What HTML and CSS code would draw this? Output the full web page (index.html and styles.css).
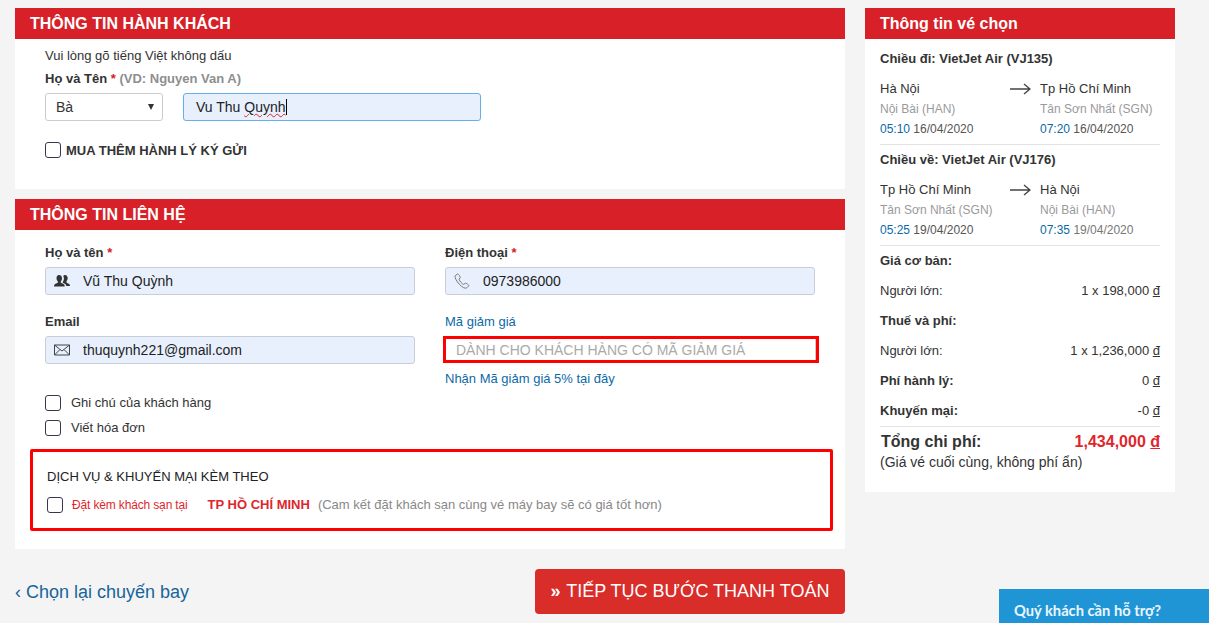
FILE: index.html
```html
<!DOCTYPE html>
<html lang="vi">
  <head>
    <meta charset="utf-8" />
    <title>Thông tin hành khách</title>
    <link rel="stylesheet" href="styles.css">
  </head>
  <body>
    <div class="page">
      <main class="main-col">
        <section class="panel panel-passenger">
          <h2 class="panel-head">THÔNG TIN HÀNH KHÁCH</h2>
          <div class="panel-body">
            <p class="hint">Vui lòng gõ tiếng Việt không dấu</p>
            <p class="name-label">Họ và Tên <span class="req">*</span> <span class="muted">(VD: Nguyen Van A)</span></p>
            <div class="name-row">
              <div class="select-box"><span>Bà</span><i class="select-arrow"></i></div>
              <div class="name-input"><span class="typo">Vu Thu <u>Quynh</u></span><i class="caret"></i></div>
            </div>
            <label class="baggage"><span class="check"></span>MUA THÊM HÀNH LÝ KÝ GỬI</label>
          </div>
        </section>

        <section class="panel panel-contact">
          <h2 class="panel-head">THÔNG TIN LIÊN HỆ</h2>
          <div class="panel-body">
            <div class="field-grid">
              <div class="field">
                <label class="field-label">Họ và tên <span class="req">*</span></label>
                <div class="icon-input">
                  <svg class="ico" viewBox="0 0 16 14" width="16" height="14"><path fill="#333" d="M5 1c2 0 3 1.500 3 3.500 0 1.500-.8 2.500-1.300 3.200 0 1 .5 1.300 2 1.900 1.300.5 2 1 2 2.900H0c0-1.900.8-2.400 2-2.900 1.500-.6 2-.9 2-1.900C3.500 7 2.500 6 2.500 4.500 2.500 2.500 3.200 1 5 1z"/><path fill="#333" d="M11 1c1.800 0 2.700 1.500 2.700 3.300 0 1.400-.8 2.500-1.300 3.200 0 1 .4 1.300 1.700 1.900 1 .4 1.900 1 1.900 2.600h-3.700c-.2-1.300-1.100-2.100-2.400-2.700-.9-.4-1.200-.6-1.200-1.300.7-.9 1.200-2 1.200-3.500 0-1-.2-1.900-.7-2.600.5-.6 1.100-.9 1.800-.9z"/></svg>
                  <input class="plain-input" value="Vũ Thu Quỳnh">
                </div>
              </div>
              <div class="field">
                <label class="field-label">Điện thoại <span class="req">*</span></label>
                <div class="icon-input">
                  <svg class="ico" viewBox="0 0 16 16" width="16" height="16"><path fill="none" stroke="#777" stroke-width="1" d="M3.500 1 1.200 2.700C.8 3.200 1 5.500 3.500 9s5.500 6 8 6.200c1 .1 3-1.700 3.300-2.700.1-.5-2.700-2.500-3.300-2.300l-1.800 1.200C8.500 11.500 5.500 8 5 6.200l1.300-1.500C6.500 4 4.500 .8 3.500 1z"/></svg>
                  <input class="plain-input" value="0973986000">
                </div>
              </div>
              <div class="field">
                <label class="field-label">Email</label>
                <div class="icon-input">
                  <svg class="ico" viewBox="0 0 16 12" width="16" height="12"><path fill="none" stroke="#444" stroke-width="1" d="M.5 1h15v10H.5zM.5 1 8 7l7.500-6M.5 11 6 5.500M15.500 11 10 5.500"/></svg>
                  <input class="plain-input" value="thuquynh221@gmail.com">
                </div>
              </div>
              <div class="field">
                <label class="field-label field-link">Mã giảm giá</label>
                <input class="coupon" placeholder="DÀNH CHO KHÁCH HÀNG CÓ MÃ GIẢM GIÁ">
                <a class="coupon-link">Nhận Mã giảm giá 5% tại đây</a>
              </div>
            </div>

            <div class="notes">
              <label class="note-row"><span class="check"></span>Ghi chú của khách hàng</label>
              <label class="note-row"><span class="check"></span>Viết hóa đơn</label>
            </div>
          </div>

          <div class="promo">
            <div class="promo-title">DỊCH VỤ &amp; KHUYẾN MẠI KÈM THEO</div>
            <label class="promo-row">
              <span class="check"></span>
              <span class="promo-red">Đặt kèm khách sạn tại</span>
              <b class="promo-city">TP HỒ CHÍ MINH</b>
              <span class="promo-note">(Cam kết đặt khách sạn cùng vé máy bay sẽ có giá tốt hơn)</span>
            </label>
          </div>
        </section>

        <div class="actions">
          <a class="back-link">‹ Chọn lại chuyến bay</a>
          <a class="next-btn"><b>»</b> TIẾP TỤC BƯỚC THANH TOÁN</a>
        </div>
      </main>

      <aside class="side-col">
        <h2 class="side-head">Thông tin vé chọn</h2>
        <div class="side-body">
          <div class="leg leg-first">
            <div class="leg-title">Chiều đi: VietJet Air (VJ135)</div>
            <div class="leg-grid">
              <div>
                <div class="city">Hà Nội</div>
                <div class="airport">Nội Bài (HAN)</div>
                <div class="when"><span class="time">05:10</span> 16/04/2020</div>
              </div>
              <svg class="arrow" viewBox="0 0 21 12" width="21" height="12"><path fill="none" stroke="#444" stroke-width="1.400" d="M0 6h20M14 1l6 5-6 5"/></svg>
              <div>
                <div class="city">Tp Hồ Chí Minh</div>
                <div class="airport">Tân Sơn Nhất (SGN)</div>
                <div class="when"><span class="time">07:20</span> 16/04/2020</div>
              </div>
            </div>
          </div>
          <div class="leg">
            <div class="leg-title">Chiều về: VietJet Air (VJ176)</div>
            <div class="leg-grid">
              <div>
                <div class="city">Tp Hồ Chí Minh</div>
                <div class="airport">Tân Sơn Nhất (SGN)</div>
                <div class="when"><span class="time">05:25</span> 19/04/2020</div>
              </div>
              <svg class="arrow" viewBox="0 0 21 12" width="21" height="12"><path fill="none" stroke="#444" stroke-width="1.400" d="M0 6h20M14 1l6 5-6 5"/></svg>
              <div>
                <div class="city">Hà Nội</div>
                <div class="airport">Nội Bài (HAN)</div>
                <div class="when"><span class="time">07:35</span> <span class="date-light">19/04/2020</span></div>
              </div>
            </div>
          </div>
          <div class="prices">
            <div class="price-row"><b>Giá cơ bản:</b></div>
            <div class="price-row"><span>Người lớn:</span><span>1 x 198,000 <u>đ</u></span></div>
            <div class="price-row"><b>Thuế và phí:</b></div>
            <div class="price-row"><span>Người lớn:</span><span>1 x 1,236,000 <u>đ</u></span></div>
            <div class="price-row"><b>Phí hành lý:</b><span>0 <u>đ</u></span></div>
            <div class="price-row"><b>Khuyến mại:</b><span>-0 <u>đ</u></span></div>
          </div>
          <div class="total">
            <div class="total-row"><b>Tổng chi phí:</b><b class="total-num">1,434,000 <u>đ</u></b></div>
            <div class="total-note">(Giá vé cuối cùng, không phí ẩn)</div>
          </div>
        </div>
      </aside>
    </div>

    <div class="support">Quý khách cần hỗ trợ?</div>
  </body>
</html>
```

FILE: styles.css
```css
* {
  box-sizing: border-box;
}

html, body {
  height: 100%;
}

body {
  margin: 0;
  overflow: hidden;
  background-color: #f4f4f4;
  color: #333;
  font-family: "Liberation Sans", Arial, sans-serif;
  font-size: 13px;
}

.page {
  display: flex;
  gap: 20px;
  padding: 8px 0 0 15px;
}

.main-col {
  width: 830px;
}

.side-col {
  width: 310px;
}

/* panels */
.panel {
  background: #fff;
}

.panel-passenger {
  height: 181px;
  margin-bottom: 10px;
}

.panel-contact {
  height: 350px;
}

.panel-head {
  margin: 0;
  height: 31px;
  padding-left: 15px;
  background: #d72027;
  color: #fff;
  font-size: 16px;
  font-weight: bold;
  line-height: 31px;
}

.panel-body {
  padding: 0 30px;
}

.hint {
  margin: 0;
  padding-top: 8px;
  line-height: 17px;
  font-size: 13px;
}

.name-label {
  margin: 6px 0 0;
  font-size: 13px;
  font-weight: bold;
  line-height: 17px;
}

.req {
  color: #d72027;
}

.muted {
  color: #8e8e8e;
}

.name-row {
  display: flex;
  gap: 20px;
  margin-top: 6px;
}

.select-box {
  display: flex;
  align-items: center;
  justify-content: space-between;
  width: 118px;
  height: 28px;
  padding: 0 8px 0 10px;
  border: 1px solid #ccc;
  border-radius: 3px;
  background: #fff;
  font-size: 14px;
}

.select-arrow {
  width: 0;
  height: 0;
  border-top: 6px solid #333;
  border-left: 3px solid transparent;
  border-right: 3px solid transparent;
}

.name-input {
  display: flex;
  align-items: center;
  width: 298px;
  height: 28px;
  padding-left: 12px;
  border: 1px solid #66afe9;
  border-radius: 3px;
  background: #e8f0fe;
  color: #222;
  font-size: 14px;
}

.typo u {
  text-decoration: underline wavy #e02020 1px;
  text-underline-offset: 1px;
}

.caret {
  width: 1px;
  height: 16px;
  background: #000;
}

.check {
  flex: none;
  display: inline-block;
  width: 16px;
  height: 16px;
  border: 1.500px solid #3a3650;
  border-radius: 3px;
  background: #fff;
}

.baggage {
  display: flex;
  align-items: center;
  gap: 5px;
  margin-top: 21px;
  font-size: 13px;
  font-weight: bold;
}

/* contact form */
.field-grid {
  display: grid;
  grid-template-columns: 370px 370px;
  column-gap: 30px;
}

.field {
  height: 69px;
  padding-top: 14px;
}

.field-label {
  display: block;
  height: 17px;
  line-height: 17px;
  font-size: 13px;
  font-weight: bold;
}

.field-link {
  color: #0b6aa8;
  font-weight: normal;
}

.icon-input {
  display: flex;
  align-items: center;
  height: 28px;
  margin-top: 6px;
  padding-left: 8px;
  border: 1px solid #c9ced6;
  border-radius: 3px;
  background: #e8f0fe;
}

.ico {
  flex: none;
}

.plain-input {
  flex: 1;
  min-width: 0;
  margin-left: 13px;
  padding: 0;
  border: 0;
  outline: 0;
  background: transparent;
  color: #222;
  font-family: inherit;
  font-size: 14px;
}

.coupon {
  display: block;
  width: 376px;
  height: 27px;
  margin: 6px 0 0 -2px;
  padding: 0 0 0 10px;
  border: 3px solid #f00;
  box-shadow: inset -1px 0 0 #ccc;
  outline: 0;
  font-family: inherit;
  font-size: 14px;
}

.coupon::placeholder {
  color: #aaa;
}

.coupon-link {
  display: block;
  margin-top: 7px;
  color: #0b6aa8;
  font-size: 13px;
  line-height: 17px;
}

.notes {
  padding-top: 22px;
}

.note-row {
  display: flex;
  align-items: center;
  gap: 10px;
  height: 25px;
  font-size: 13px;
}

.promo {
  height: 82px;
  margin: 9px 12px 0 15px;
  padding: 16px 14px 0;
  border: 3px solid #f00;
  border-radius: 2px;
}

.promo-title {
  line-height: 18px;
  font-size: 13px;
  color: #222;
}

.promo-row {
  display: flex;
  align-items: baseline;
  margin-top: 11px;
  font-size: 13px;
}

.promo-row .check {
  align-self: center;
  margin-right: 9px;
}

.promo-red {
  color: #e0262c;
  font-size: 12px;
  letter-spacing: -0.15px;
}

.promo-city {
  margin-left: 20px;
  color: #e0262c;
}

.promo-note {
  margin-left: 8px;
  color: #888;
}

.actions {
  display: flex;
  align-items: center;
  justify-content: space-between;
  margin-top: 20px;
}

.back-link {
  padding-top: 2px;
  color: #17649b;
  font-size: 18px;
}

.next-btn {
  width: 310px;
  height: 45px;
  border-radius: 4px;
  background: #d92d2a;
  color: #fff;
  font-size: 18px;
  line-height: 45px;
  text-align: center;
}

.next-btn b {
  margin-right: 1px;
}

/* sidebar */
.side-head {
  margin: 0;
  height: 31px;
  padding-left: 15px;
  background: #d72027;
  color: #fff;
  font-size: 16px;
  font-weight: bold;
  line-height: 31px;
}

.side-body {
  height: 453px;
  padding: 0 15px;
  background: #fff;
}

.leg {
  height: 101px;
  padding-top: 5px;
  border-bottom: 1px solid #e3e3e3;
}

.leg-first {
  height: 106px;
  padding-top: 10px;
}

.leg-title {
  line-height: 20px;
  font-size: 13px;
  font-weight: bold;
}

.leg-grid {
  display: grid;
  grid-template-columns: 130px 30px 1fr;
  margin-top: 10px;
  font-size: 12px;
  line-height: 20px;
}

.arrow {
  margin-top: 4px;
}

.city {
  font-size: 13px;
}

.airport {
  color: #9a9a9a;
}

.when {
  color: #555;
}

.time {
  color: #0b6aa8;
}

.date-light {
  color: #777;
}

.price-row {
  display: flex;
  justify-content: space-between;
  height: 30px;
  line-height: 30px;
  font-size: 13px;
}

.total {
  border-top: 1px solid #e3e3e3;
}

.total-row {
  display: flex;
  justify-content: space-between;
  padding: 5px 0 0 1px;
  line-height: 20px;
  font-size: 16px;
}

.total-num {
  color: #e0262c;
}

.total-note {
  line-height: 21px;
  font-size: 14px;
}

.support {
  position: fixed;
  right: 0;
  bottom: 0;
  width: 210px;
  height: 34px;
  padding-left: 15px;
  background: #2095d6;
  color: #e9f6fd;
  font-family: Lato, sans-serif;
  font-size: 14.700px;
  font-weight: bold;
  line-height: 42px;
}
```
